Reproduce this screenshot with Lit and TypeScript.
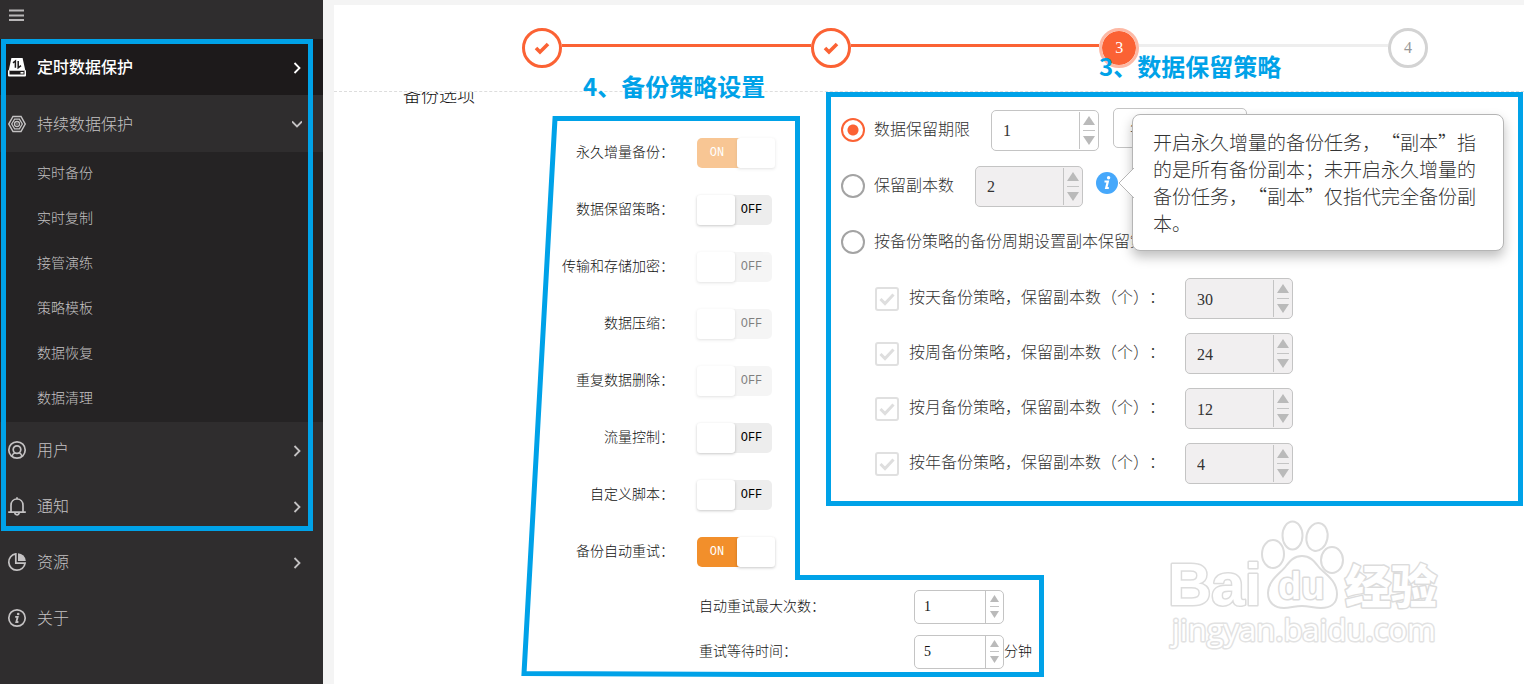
import { LitElement, html, svg, css, nothing } from "lit";
import { customElement, state } from "lit/decorators.js";
import { classMap } from "lit/directives/class-map.js";

interface MenuItem {
  id: string;
  label: string;
  arrow: "right" | "down" | "none";
  active?: boolean;
  children?: string[];
}

interface SwitchRow {
  id: string;
  label: string;
  on: boolean;
  disabled: boolean;
}

const MENU: MenuItem[] = [
  { id: "timed", label: "定时数据保护", arrow: "right", active: true },
  {
    id: "continuous",
    label: "持续数据保护",
    arrow: "down",
    children: ["实时备份", "实时复制", "接管演练", "策略模板", "数据恢复", "数据清理"],
  },
  { id: "user", label: "用户", arrow: "right" },
  { id: "notice", label: "通知", arrow: "right" },
  { id: "resource", label: "资源", arrow: "right" },
  { id: "about", label: "关于", arrow: "none" },
];

const ICONS: Record<string, unknown> = {
  timed: svg`<path d="M3.400 0h11.200l2.600 12H.8z" fill="currentColor"/>
    <path d="M0 12.200h18v5.300a1 1 0 0 1-1 1H1a1 1 0 0 1-1-1z" fill="currentColor"/>
    <path d="M1.500 13h15v3.500h-15z" fill="#1d1a1b"/>
    <rect x="12.500" y="14" width="3" height="1.600" fill="currentColor"/>
    <path d="M5 4.800 7.400 3v6.800M10.200 3v6.800l2.800-2.200" fill="none" stroke="#1d1a1b" stroke-width="1.500"/>`,
  continuous: svg`<path d="M5 1.500h8L17.200 9 13 16.500H5L.8 9z" fill="none" stroke="currentColor" stroke-width="1.500"/>
    <path d="M6.600 4.200h4.800L14.300 9l-2.900 4.800H6.600L3.700 9z" fill="none" stroke="currentColor" stroke-width="1.300"/>
    <circle cx="9" cy="9" r="2.500" fill="none" stroke="currentColor" stroke-width="1.300"/>
    <circle cx="9" cy="9" r=".8" fill="currentColor"/>`,
  user: svg`<circle cx="9" cy="9" r="8.200" fill="none" stroke="currentColor" stroke-width="1.700"/>
    <circle cx="9" cy="8.600" r="3.800" fill="none" stroke="currentColor" stroke-width="1.700"/>
    <path d="M4 15.400c.5-2 1.600-3.200 3-3.600M14 15.400c-.5-2-1.600-3.200-3-3.600" fill="none" stroke="currentColor" stroke-width="1.600"/>`,
  notice: svg`<path d="M.2 15.200h17.600M3 15V8.400C3 4.600 5.600 2 9 2s6 2.600 6 6.400V15" fill="none" stroke="currentColor" stroke-width="1.700"/>
    <path d="M9 2V.2M6.800 15.600a2.200 2.200 0 0 0 4.400 0" fill="none" stroke="currentColor" stroke-width="1.700"/>`,
  resource: svg`<path d="M7.800.9a8.200 8.200 0 1 0 9.300 9.300H7.800z" fill="none" stroke="currentColor" stroke-width="1.700"/>
    <path d="M10 .2A8.200 8.200 0 0 1 17.800 8H10z" fill="currentColor"/>`,
  about: svg`<circle cx="9" cy="9" r="8.200" fill="none" stroke="currentColor" stroke-width="1.700"/>
    <circle cx="10.200" cy="5" r="1.300" fill="currentColor"/>
    <path d="M7.200 7.800h2.500L8.300 13h2.100" fill="none" stroke="currentColor" stroke-width="1.800"/>`,
};

const PERIODS = [
  { id: "day", label: "按天备份策略，保留副本数（个）：", value: 30 },
  { id: "week", label: "按周备份策略，保留副本数（个）：", value: 24 },
  { id: "month", label: "按月备份策略，保留副本数（个）：", value: 12 },
  { id: "year", label: "按年备份策略，保留副本数（个）：", value: 4 },
];

@customElement("app-root")
export class AppRoot extends LitElement {
  @state() private mode = "duration";

  @state() private switches: SwitchRow[] = [
    { id: "forever", label: "永久增量备份：", on: true, disabled: true },
    { id: "retain", label: "数据保留策略：", on: false, disabled: false },
    { id: "encrypt", label: "传输和存储加密：", on: false, disabled: true },
    { id: "compress", label: "数据压缩：", on: false, disabled: true },
    { id: "dedupe", label: "重复数据删除：", on: false, disabled: true },
    { id: "flow", label: "流量控制：", on: false, disabled: false },
    { id: "script", label: "自定义脚本：", on: false, disabled: false },
    { id: "retry", label: "备份自动重试：", on: true, disabled: false },
  ];

  static styles = css`
    :host {
      display: grid;
      grid-template-columns: 323px minmax(0, 1fr);
      position: relative;
      min-height: 100vh;
      overflow: hidden;
      background: #f4f4f4;
      color: #111;
      font-family: "Liberation Serif", "Noto Sans CJK SC", sans-serif;
      font-size: 14px;
      font-weight: 300;
      text-spacing-trim: space-all;
    }
    *,
    *::before,
    *::after {
      box-sizing: border-box;
    }
    button,
    input,
    select {
      font: inherit;
      color: inherit;
      margin: 0;
    }

    /* sidebar */
    .sidebar {
      background: #2f2d2e;
      color: #c4c2c3;
    }
    .top {
      height: 39px;
      padding: 7px 8px;
    }
    .burger {
      display: block;
      padding: 0;
      border: 0;
      background: none;
      color: #b9b7b8;
      height: 18px;
    }
    .burger svg,
    .icon,
    .arrow {
      display: block;
    }
    .icon {
      overflow: visible;
    }
    .menu,
    .submenu {
      list-style: none;
      margin: 0;
      padding: 0;
    }
    .item {
      display: flex;
      align-items: center;
      gap: 11px;
      height: 56px;
      padding: 0 21px 0 8px;
      font-size: 16px;
      color: inherit;
      text-decoration: none;
    }
    .item.active {
      background: #1d1a1b;
      color: #fff;
      font-weight: 500;
    }
    .item.open {
      height: 57px;
    }
    .item .name {
      flex: 1;
      padding-bottom: 2px;
    }
    .submenu {
      background: #252324;
    }
    .sub {
      display: block;
      height: 45px;
      padding-left: 37px;
      line-height: 43px;
      color: inherit;
      text-decoration: none;
    }

    /* main panel */
    .panel {
      margin: 5px 0 0 11px;
      background: #fff;
      min-width: 0;
    }
    .steps {
      display: flex;
      align-items: center;
      list-style: none;
      margin: 0;
      height: 87px;
      padding: 0 96px 0 188px;
      border-bottom: 1px dashed #ddd;
    }
    .step {
      display: flex;
      align-items: center;
      justify-content: center;
      flex: none;
      width: 40px;
      height: 40px;
      border-radius: 50%;
      border: 3px solid #fb6234;
      background: #fff;
      color: #fb6234;
      font-size: 16px;
    }
    .step.current {
      border-color: #fdb9a5;
      background: #fb6234;
      background-clip: padding-box;
      color: #fff;
    }
    .step.todo {
      border-color: #d3d3d3;
      color: #999;
    }
    .line {
      flex: 1;
      height: 3px;
      margin-bottom: 5px;
      background: #fb6234;
    }
    .line.todo {
      background: #eee;
    }

    .body {
      display: grid;
      grid-template-columns: 150px 287px minmax(0, 1fr);
      padding-left: 69px;
      overflow: hidden;
    }
    .heading {
      margin: -8px 0 0;
      font-size: 18px;
      line-height: 24px;
      font-weight: 300;
    }
    .switches {
      padding-top: 32px;
    }
    .switch-row {
      display: grid;
      grid-template-columns: 121px auto;
      gap: 23px;
      align-items: center;
      justify-content: start;
      height: 57px;
    }
    .switch-label {
      text-align: right;
      white-space: nowrap;
      padding-bottom: 4px;
    }
    .switch {
      position: relative;
      display: flex;
      height: 30px;
      border-radius: 5px;
      font-family: "Liberation Mono", monospace;
      font-size: 12px;
      font-weight: 400;
      background: #ededed;
      color: #000;
    }
    .switch.off {
      width: 75px;
    }
    .switch.on {
      width: 78px;
      background: #f28f2b;
      color: #fff;
    }
    .switch.disabled {
      opacity: 0.5;
    }
    .switch input {
      position: absolute;
      inset: 0;
      width: 100%;
      height: 100%;
      opacity: 0;
    }
    .knob {
      width: 38px;
      background: #fff;
      border-radius: 3px;
      box-shadow: 0 1px 3px rgba(0, 0, 0, 0.22);
    }
    .word {
      flex: 1;
      text-align: center;
      line-height: 31px;
    }
    .off .word {
      padding-right: 4px;
    }

    /* numeric stepper */
    .number {
      display: inline-flex;
      flex: none;
      width: 108px;
      height: 41px;
      border: 1px solid #c4c4c4;
      border-radius: 5px;
      background: #fff;
      overflow: hidden;
      font-size: 16px;
      font-weight: 400;
    }
    .number.small {
      width: 90px;
      height: 34px;
      font-size: 14px;
    }
    .number.disabled {
      background: #f1eff0;
    }
    .number input {
      flex: 1;
      min-width: 0;
      border: 0;
      padding: 2px 0 0 11px;
      background: none;
      outline: none;
      appearance: textfield;
      -moz-appearance: textfield;
    }
    .number.small input {
      padding: 0 0 0 9px;
    }
    .number input::-webkit-inner-spin-button {
      appearance: none;
      margin: 0;
    }
    .spin {
      display: flex;
      flex-direction: column;
      align-items: center;
      justify-content: center;
      width: 19px;
      border-left: 1px solid #c4c4c4;
      margin: 1px 0;
    }
    .small .spin {
      width: 18px;
      margin: 0;
    }
    .spin button {
      display: flex;
      padding: 0;
      border: 0;
      background: none;
    }
    .spin i {
      width: 12px;
      height: 1px;
      margin: 5px 0;
      background: #c4c4c4;
    }
    .small .spin i {
      width: 9px;
      margin: 4px 0;
    }

    /* retention policies */
    .retention {
      padding-top: 10px;
      font-size: 16px;
      color: #333;
    }
    .choice {
      display: flex;
      align-items: center;
      height: 56px;
    }
    .choice input[type="radio"] {
      appearance: none;
      flex: none;
      width: 24px;
      height: 24px;
      margin: 0 9px 0 1px;
      border: 2px solid #a3a3a3;
      border-radius: 50%;
    }
    .choice input[type="radio"]:checked {
      border-color: #fb6234;
      background: radial-gradient(circle, #fb6234 5px, transparent 6px);
    }
    .choice label {
      white-space: nowrap;
      padding-bottom: 4px;
    }
    .choice .number {
      margin-left: 21px;
    }
    .unit {
      width: 134px;
      height: 40px;
      margin: 0 0 4px 14px;
      padding: 0 16px;
      appearance: none;
      border: 1px solid #c4c4c4;
      border-radius: 5px;
      background: #fff;
    }
    .info {
      position: relative;
      width: 22px;
      height: 22px;
      margin: 0 0 7px 13px;
      flex: none;
    }
    .info-button {
      display: block;
      padding: 0;
      border: 0;
      background: none;
    }
    .info-button svg {
      display: block;
    }
    .tip {
      position: absolute;
      z-index: 2;
      left: 36px;
      top: -58px;
      width: 372px;
      padding: 13px 18px 14px 20px;
      border: 1px solid #b5b5b5;
      border-radius: 8px;
      background: #fff;
      box-shadow: 0 6px 12px rgba(0, 0, 0, 0.25);
      font-family: "Noto Sans CJK SC", sans-serif;
      font-size: 19px;
      line-height: 27px;
      color: #333;
    }
    .tip svg {
      position: absolute;
      left: -15px;
      top: 53px;
    }
    .period {
      display: grid;
      grid-template-columns: 24px 286px 108px;
      align-items: center;
      height: 55px;
      padding-left: 35px;
    }
    .periods {
      padding-top: 1px;
    }
    .tick {
      position: relative;
      width: 24px;
      height: 24px;
    }
    .tick input {
      appearance: none;
      display: block;
      width: 24px;
      height: 24px;
      border: 2px solid #e0e0e0;
      border-radius: 3px;
      background: #fff;
    }
    .tick svg {
      position: absolute;
      left: 4px;
      top: 5px;
      pointer-events: none;
    }
    .period label {
      padding: 0 0 6px 10px;
      white-space: nowrap;
    }

    /* retry settings */
    .retry {
      grid-column: 2 / -1;
      padding: 4px 0 6px 146px;
    }
    .retry-row {
      display: grid;
      grid-template-columns: 215px 90px auto;
      align-items: center;
      justify-content: start;
      height: 45px;
    }
    .retry-text {
      padding-bottom: 4px;
    }

    /* notes drawn over the screen */
    .notes {
      position: absolute;
      inset: 0;
      width: 100%;
      height: 100%;
      pointer-events: none;
      z-index: 1;
    }
    .frame {
      fill: none;
      stroke: #00a2e8;
      stroke-width: 5;
    }
    .note {
      fill: #00a2e8;
      font-family: "Noto Sans CJK SC", sans-serif;
      font-size: 24px;
      font-weight: 700;
    }
    .mark {
      position: absolute;
      right: 78px;
      bottom: 26px;
      pointer-events: none;
    }
    .mark .shape {
      fill: #fff;
      stroke: #dcdcdc;
      stroke-width: 2;
    }
    .mark text {
      fill: #fff;
      stroke: #dcdcdc;
      stroke-width: 3;
      stroke-linejoin: round;
      paint-order: stroke;
    }
    .mark .latin {
      font-family: "Liberation Sans", sans-serif;
      font-size: 60px;
      font-weight: 700;
    }
    .mark .du {
      font-family: "Liberation Sans", sans-serif;
      font-size: 38px;
      font-weight: 700;
    }
    .mark .han {
      font-family: "Noto Sans CJK SC", sans-serif;
      font-size: 46px;
      font-weight: 900;
    }
    .mark .url {
      font-family: "Open Sans", sans-serif;
      font-size: 31px;
      font-weight: 400;
      stroke: #e2e2e2;
    }
  `;

  private toggle(id: string) {
    this.switches = this.switches.map((s) => (s.id === id ? { ...s, on: !s.on } : s));
  }

  private arrow(kind: MenuItem["arrow"]) {
    if (kind === "none") return nothing;
    const d = kind === "right" ? "M2.5 2 7.500 7l-5 5" : "M0 4.500l5 5 5-5";
    return html`<svg class="arrow" width="10" height="13" viewBox="0 0 10 13" aria-hidden="true">
      <path d=${d} fill="none" stroke="currentColor" stroke-width="1.800" />
    </svg>`;
  }

  private number(id: string, value: number, opts: { small?: boolean; disabled?: boolean; name?: string } = {}) {
    const small = !!opts.small;
    const disabled = !!opts.disabled;
    const w = small ? 9 : 12;
    const h = small ? 7 : 9;
    const step = (delta: number) => {
      const el = this.renderRoot.querySelector<HTMLInputElement>("#" + id);
      if (el) el.value = String(Math.max(0, Number(el.value) + delta));
    };
    return html`<span class=${classMap({ number: true, small, disabled })}>
      <input type="number" id=${id} .value=${String(value)} ?disabled=${disabled} aria-label=${opts.name ?? nothing} />
      <span class="spin">
        <button type="button" aria-label="增加" ?disabled=${disabled} @click=${() => step(1)}>
          <svg width=${w} height=${h} viewBox="0 0 12 9" preserveAspectRatio="none"><path d="M6 0l6 9H0z" fill="#bababa" /></svg>
        </button>
        <i></i>
        <button type="button" aria-label="减少" ?disabled=${disabled} @click=${() => step(-1)}>
          <svg width=${w} height=${h} viewBox="0 0 12 9" preserveAspectRatio="none"><path d="M0 0h12L6 9z" fill="#bababa" /></svg>
        </button>
      </span>
    </span>`;
  }

  private sidebar() {
    return html`<nav class="sidebar">
      <div class="top">
        <button class="burger" type="button" aria-label="菜单">
          <svg width="18" height="18" viewBox="0 0 18 18">
            <path d="M1 3.500h15M1 8.500h15M1 13h15" stroke="currentColor" stroke-width="2" />
          </svg>
        </button>
      </div>
      <ul class="menu">
        ${MENU.map(
          (m) => html`<li>
            <a href="#${m.id}" class=${classMap({ item: true, active: !!m.active, open: !!m.children })}>
              <svg class="icon" width="18" height="18" viewBox="0 0 18 18" aria-hidden="true">${ICONS[m.id]}</svg>
              <span class="name">${m.label}</span>
              ${this.arrow(m.arrow)}
            </a>
            ${m.children
              ? html`<ul class="submenu">
                  ${m.children.map((c) => html`<li><a class="sub" href="#">${c}</a></li>`)}
                </ul>`
              : nothing}
          </li>`
        )}
      </ul>
    </nav>`;
  }

  private steps() {
    const tick = html`<svg width="16" height="13" viewBox="0 0 16 13" aria-label="已完成">
      <path d="M2 6l4 4 8-8" fill="none" stroke="currentColor" stroke-width="3.600" />
    </svg>`;
    return html`<ol class="steps">
      <li class="step">${tick}</li>
      <li class="line" role="presentation"></li>
      <li class="step">${tick}</li>
      <li class="line" role="presentation"></li>
      <li class="step current">3</li>
      <li class="line todo" role="presentation"></li>
      <li class="step todo">4</li>
    </ol>`;
  }

  private switchRow(s: SwitchRow) {
    const knob = html`<span class="knob"></span>`;
    const word = html`<span class="word">${s.on ? "ON" : "OFF"}</span>`;
    return html`<div class="switch-row">
      <label class="switch-label" for=${s.id}>${s.label}</label>
      <span class=${classMap({ switch: true, on: s.on, off: !s.on, disabled: s.disabled })}>
        ${s.on ? [word, knob] : [knob, word]}
        <input type="checkbox" role="switch" id=${s.id} .checked=${s.on} ?disabled=${s.disabled} @change=${() => this.toggle(s.id)} />
      </span>
    </div>`;
  }

  private radio(id: string, label: string) {
    return html`<input type="radio" name="mode" id=${id} .checked=${this.mode === id} @change=${() => (this.mode = id)} />
      <label for=${id}>${label}</label>`;
  }

  private retention() {
    return html`<section class="retention">
      <div class="choice">
        ${this.radio("duration", "数据保留期限")} ${this.number("duration-value", 1, { name: "数据保留期限" })}
        <select class="unit" aria-label="期限单位">
          <option>年</option>
          <option>月</option>
          <option>天</option>
        </select>
      </div>
      <div class="choice">
        ${this.radio("copies", "保留副本数")} ${this.number("copies-value", 2, { disabled: true, name: "保留副本数" })}
        <div class="info">
          <button class="info-button" type="button" aria-label="说明">
            <svg width="22" height="22" viewBox="0 0 22 22">
              <circle cx="11" cy="11" r="11" fill="#46a8fb" />
              <circle cx="12.600" cy="5.800" r="1.700" fill="#fff" />
              <path d="M8.500 9.500h3.300l-1.600 6.500h2.600" fill="none" stroke="#fff" stroke-width="2.200" />
            </svg>
          </button>
          <div class="tip" role="tooltip">
            开启永久增量的备份任务，“副本”指的是所有备份副本；未开启永久增量的备份任务，“副本”仅指代完全备份副本。
            <svg width="16" height="30" viewBox="0 0 16 30" aria-hidden="true">
              <path d="M16 0 1 15l15 15" fill="#fff" stroke="#b5b5b5" />
            </svg>
          </div>
        </div>
      </div>
      <div class="choice">${this.radio("cycle", "按备份策略的备份周期设置副本保留策略")}</div>
      <div class="periods">
        ${PERIODS.map(
          (p) => html`<div class="period">
            <span class="tick">
              <input type="checkbox" id=${p.id} checked disabled />
              <svg width="16" height="14" viewBox="0 0 16 14" aria-hidden="true">
                <path d="M1.500 7l4.500 4.500L14.500 2.500" fill="none" stroke="#dedede" stroke-width="3" />
              </svg>
            </span>
            <label for=${p.id}>${p.label}</label>
            ${this.number(p.id + "-value", p.value, { disabled: true, name: p.label })}
          </div>`
        )}
      </div>
    </section>`;
  }

  private notes() {
    return html`<svg class="notes" aria-hidden="true">
      <rect class="frame" x="3.500" y="41.500" width="307" height="487" />
      <rect class="frame" x="828.500" y="94.500" width="692" height="409" />
      <path class="frame" d="M555 118.500H797.500V577.500H1041.500V674.500H782L524 673.500z" />
      <text class="note" x="583" y="96">4、备份策略设置</text>
      <text class="note" x="1099" y="76">3、数据保留策略</text>
    </svg>`;
  }

  private watermark() {
    return html`<svg class="mark" width="280" height="140" viewBox="1166 518 280 140" aria-hidden="true">
      <text class="latin" x="1168" y="605">Bai</text>
      <ellipse class="shape" cx="1273" cy="554" rx="11" ry="14" />
      <ellipse class="shape" cx="1292.500" cy="535.500" rx="10" ry="14" />
      <ellipse class="shape" cx="1317" cy="537" rx="10.500" ry="14" transform="rotate(12 1317 537)" />
      <ellipse class="shape" cx="1332" cy="560" rx="11" ry="13" />
      <path
        class="shape"
        d="M1302 556c8 0 12 5 16 10 4 6 19 13 19 28 0 10-7 14-16 14-7 0-12-2-19-2s-12 2-18 2c-9 0-16-5-16-15 0-13 13-20 18-27 4-5 8-10 16-10z"
      />
      <text class="du" x="1278" y="599">du</text>
      <text class="han" x="1345" y="603">经验</text>
      <text class="url" x="1172" y="641">jingyan.baidu.com</text>
    </svg>`;
  }

  render() {
    return html`
      ${this.sidebar()}
      <main class="panel">
        ${this.steps()}
        <div class="body">
          <h2 class="heading">备份选项</h2>
          <div class="switches">${this.switches.map((s) => this.switchRow(s))}</div>
          ${this.retention()}
          <div class="retry">
            <div class="retry-row">
              <label class="retry-text" for="retry-max">自动重试最大次数：</label>
              ${this.number("retry-max", 1, { small: true })}
            </div>
            <div class="retry-row">
              <label class="retry-text" for="retry-wait">重试等待时间：</label>
              ${this.number("retry-wait", 5, { small: true })}
              <span class="retry-text">分钟</span>
            </div>
          </div>
        </div>
      </main>
      ${this.watermark()} ${this.notes()}
    `;
  }
}
